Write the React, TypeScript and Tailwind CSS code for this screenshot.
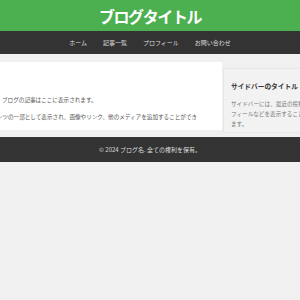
import React from "react";

export default function App() {
  const font = { fontFamily: '"Noto Sans CJK JP", "Noto Sans", sans-serif' };
  return (
    <div className="w-[300px] h-[300px] overflow-hidden bg-[#f0f0f0]" style={font}>
      <header className="h-[31px] bg-[#4caf50] flex items-center justify-center">
        <h1 className="text-white font-bold text-[16px] tracking-[-1.4px] leading-none">ブログタイトル</h1>
      </header>
      <nav className="h-[23px] bg-[#333333] flex items-center justify-center gap-[16px] text-[6px] text-[#dddddd] leading-none">
        <span>ホーム</span>
        <span>記事一覧</span>
        <span>プロフィール</span>
        <span>お問い合わせ</span>
      </nav>
      <div className="h-[83px] pt-[8px] flex justify-center gap-[1px] items-start">
        <main className="w-[282px] shrink-0 h-[68px] overflow-hidden bg-white pl-[62px] pt-[35px] text-[5.6px] leading-[1.2] text-[#555555]">
          <p className="whitespace-nowrap">ブログの記事はここに表示されます。</p>
          <p className="mt-[10px] -ml-[22px] w-[222px]">コンテンツの一部として表示され、画像やリンク、他のメディアを追加することができます。</p>
        </main>
        <aside className="w-[137px] shrink-0 mt-[6px] h-[65px] bg-[#f2f2f2] border border-[#e8e8e8] pl-[7px] pt-[14px] text-[#777777]">
          <h2 className="text-[6.7px] font-bold text-[#333333] leading-none whitespace-nowrap">サイドバーのタイトル</h2>
          <p className="mt-[9px] text-[5.6px] leading-[10px] w-[91px]">サイドバーには、最近の投稿やプロフィールなどを表示することができます。</p>
        </aside>
      </div>
      <footer className="h-[25px] bg-[#333333] flex items-center justify-center text-[6px] text-[#dddddd] leading-none">
        © 2024 ブログ名. 全ての権利を保有。
      </footer>
    </div>
  );
}
